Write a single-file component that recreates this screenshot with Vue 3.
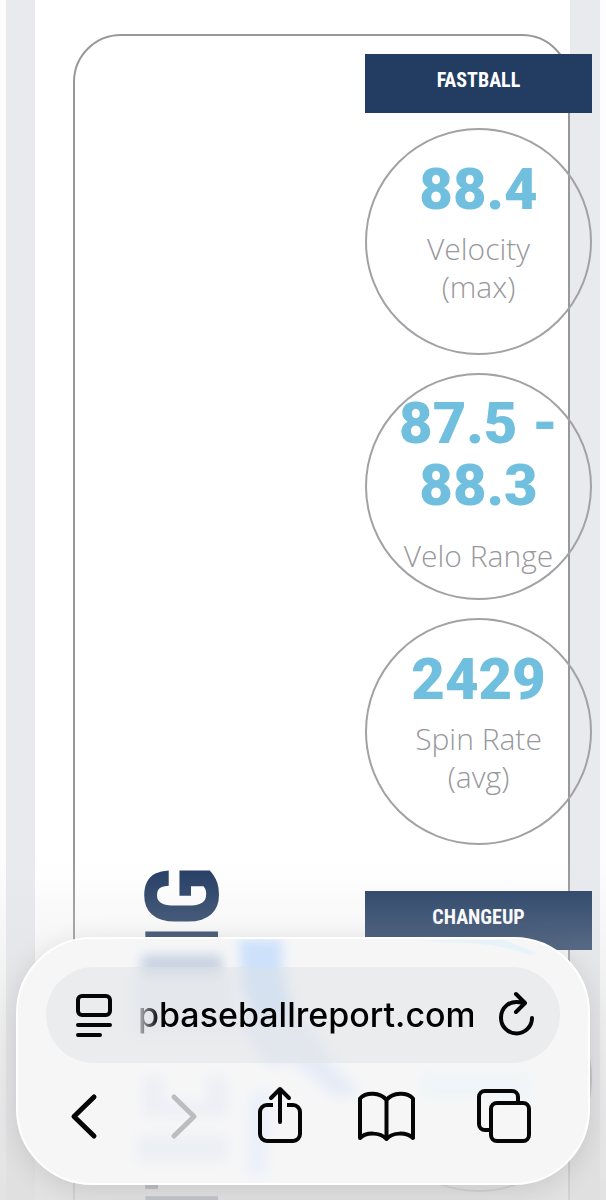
<template>
  <div class="screen">
    <main class="page">
      <div class="sheet">
        <section class="report-card">
          <h1 class="report-title">PITCHING</h1>

          <div class="stats">
            <div v-for="pitch in pitches" :key="pitch.name" class="pitch">
              <h2 class="pitch-name">{{ pitch.name }}</h2>
              <div
                  v-for="(stat, index) in pitch.stats"
                  :key="index"
                  class="circle"
                  :class="{ 'circle-range': stat.range }"
              >
                <strong class="value">{{ stat.value }}</strong>
                <span class="label">{{ stat.label }}</span>
              </div>
            </div>
          </div>
        </section>
      </div>
    </main>

    <div class="shade"></div>

    <nav class="browser-bar" aria-label="Browser">
      <svg class="glass" viewBox="0 0 574 248" preserveAspectRatio="none" aria-hidden="true">
        <defs>
          <filter id="soft" x="-20%" y="-20%" width="140%" height="140%">
            <feGaussianBlur stdDeviation="6" />
          </filter>
        </defs>
        <g filter="url(#soft)">
          <path d="M124 16h82v20h-82z" fill="#c9d3e2" />
          <path d="M116 36h100v60h-100z" fill="#ebedf2" />
          <path d="M222 0h44v30l14 60-34 10-20-50z" fill="#cde1fb" />
          <path d="M216 80l70 0 34 50 20 20v10h-22l-44-36-20 6z" fill="#e6ecf7" />
          <path d="M254 150l-4 90h-20l2-80z" fill="#ebf0f9" />
          <path d="M126 140h20v26h44v-26h20v40h-84zM120 200h90v26h-90z" fill="#eceff4" />
          <path d="M404 136h112v26h-112z" fill="#eff5f8" />
        </g>
        <path d="M400 1h90l34 14-10 1q-30-12-70-12z" fill="#e6f4f9" />
      </svg>

      <div class="address">
        <button type="button" aria-label="Page menu">
          <svg width="36" height="44" viewBox="0 0 36 44">
            <rect x="2" y="3" width="32" height="19" rx="4" />
            <path d="M2 32h32M2 42h22" />
          </svg>
        </button>
        <input v-model="url" type="text" aria-label="Address">
        <button type="button" aria-label="Reload">
          <svg width="36" height="44" viewBox="0 0 36 44">
            <path d="M17 1l9 9-9 9M24 10C10 6 2 15 2 25a15.500 15.500 0 0 0 31 0" />
          </svg>
        </button>
      </div>

      <div class="tools">
        <button type="button" aria-label="Back">
          <svg class="heavy" width="40" height="56" viewBox="0 0 40 56">
            <path d="M23 8L3 27.500 23 47" />
          </svg>
        </button>
        <button type="button" aria-label="Forward" disabled>
          <svg class="heavy" width="28" height="56" viewBox="0 0 28 56">
            <path d="M6 8l20 19.500L6 47" />
          </svg>
        </button>
        <button type="button" aria-label="Share">
          <svg width="48" height="56" viewBox="0 0 48 56">
            <path class="flat" d="M20 16h-6a7 7 0 0 0-7 7v22a7 7 0 0 0 7 7h26a7 7 0 0 0 7-7V23a7 7 0 0 0-7-7h-6" />
            <path d="M27 33V0M18 9l9-9 9 9" />
          </svg>
        </button>
        <button type="button" aria-label="Bookmarks">
          <svg width="62" height="56" viewBox="0 0 62 56">
            <path d="M28.500 11C22 3 8 3 2 9.500V49c6-6 20-6 26.500 1 6-7 20-7 26.500-1V9.500C49 3 35 3 28.500 11v39" />
          </svg>
        </button>
        <button type="button" aria-label="Tabs">
          <svg width="54" height="56" viewBox="0 0 54 56">
            <path d="M14 41H8a6 6 0 0 1-6-6V8a6 6 0 0 1 6-6h27a6 6 0 0 1 6 6v6" />
            <rect x="14" y="14" width="38" height="38" rx="6" />
          </svg>
        </button>
      </div>
    </nav>
  </div>
</template>

<script setup>
import { ref } from 'vue'

const url = ref('pbaseballreport.com')

const pitches = [
  {
    name: 'FASTBALL',
    stats: [
      { value: '88.4', label: 'Velocity (max)' },
      { value: '87.5 - 88.3', label: 'Velo Range', range: true },
      { value: '2429', label: 'Spin Rate (avg)' }
    ]
  },
  {
    name: 'CHANGEUP',
    stats: [{ value: '', label: '' }]
  }
]
</script>

<style>
body {
  margin: 0;
  background: #fff;
}
</style>

<style scoped>
.screen {
  height: 100vh;
  overflow: hidden;
  position: relative;
  background: #fdfdfe;
  font-family: "Open Sans", sans-serif;
}

.page {
  margin: 0 6px;
  padding: 0 30px 0 29px;
  background: #e9eaee;
}

.sheet {
  padding: 34px 0 0 38px;
  background: #fff;
}

.report-card {
  display: flex;
  justify-content: space-between;
  align-items: flex-start;
  min-height: 1300px;
  box-sizing: border-box;
  padding: 18px 0 0 58px;
  border: 2px solid #98989b;
  border-radius: 48px;
}

.report-title {
  margin: 812px 0 0;
  writing-mode: vertical-rl;
  transform: rotate(180deg);
  font-family: "Roboto Condensed", Roboto, sans-serif;
  font-size: 102px;
  font-weight: 800;
  line-height: 100px;
  color: #223b62;
}

.stats {
  width: 227px;
  flex: none;
  margin-right: -24px;
}

.pitch {
  display: flex;
  flex-direction: column;
  gap: 18px;
  margin-bottom: 46px;
}

.pitch-name {
  margin: 0 0 -3px;
  height: 59px;
  line-height: 52px;
  text-align: center;
  background: #223c62;
  color: #fff;
  font-family: "Roboto Condensed", Roboto, sans-serif;
  font-size: 20px;
  font-weight: 700;
}

.circle {
  box-sizing: border-box;
  height: 227px;
  padding: 28px 24px 0;
  border: 2px solid #a2a2a6;
  border-radius: 50%;
  display: flex;
  flex-direction: column;
  gap: 10px;
  text-align: center;
}

.circle-range {
  padding-top: 17px;
  gap: 21px;
}

.value {
  font-family: Roboto, sans-serif;
  font-size: 58px;
  font-weight: 900;
  line-height: 62px;
  color: #70bfde;
}

.label {
  font-size: 30px;
  font-weight: 300;
  line-height: 38px;
  color: #98989c;
}

.shade {
  position: absolute;
  left: 0;
  right: 0;
  bottom: 0;
  height: 340px;
  background: linear-gradient(rgba(222, 222, 222, 0), rgba(222, 222, 222, 0.3) 28%, rgba(222, 222, 222, 0.86));
}

.browser-bar {
  position: absolute;
  left: 16px;
  right: 16px;
  bottom: 15px;
  box-sizing: border-box;
  padding: 28px 28px 38px;
  border: 2px solid #fff;
  border-radius: 76px;
  background: #f6f6f7;
  box-shadow: 0 6px 28px rgba(0, 0, 0, 0.12);
  overflow: hidden;
}

.glass {
  position: absolute;
  left: 0;
  top: 0;
  width: 100%;
  height: 100%;
}

.address {
  position: relative;
  display: flex;
  align-items: center;
  gap: 26px;
  height: 96px;
  box-sizing: border-box;
  padding: 0 25px 0 30px;
  border-radius: 48px;
  background: rgba(222, 225, 229, 0.5);
}

.address input {
  flex: 1;
  min-width: 0;
  padding: 0;
  border: none;
  outline: none;
  background: none;
  color: #000;
  font-family: Inter, sans-serif;
  font-size: 34px;
  font-weight: 500;
  line-height: 48px;
  mask-image: linear-gradient(to right, rgba(0, 0, 0, 0.2), #000 22px);
}

.tools {
  position: relative;
  display: flex;
  justify-content: space-between;
  margin: 26px 29px 0 25px;
}

button {
  display: flex;
  padding: 0;
  border: none;
  background: none;
  color: #050505;
  cursor: pointer;
}

button:disabled {
  color: #bcbdc0;
  cursor: default;
}

button svg {
  fill: none;
  stroke: currentColor;
  stroke-width: 4;
  stroke-linecap: round;
  stroke-linejoin: round;
  overflow: visible;
}

button svg.heavy {
  stroke-width: 5;
}

button .flat {
  stroke-linecap: butt;
}
</style>
